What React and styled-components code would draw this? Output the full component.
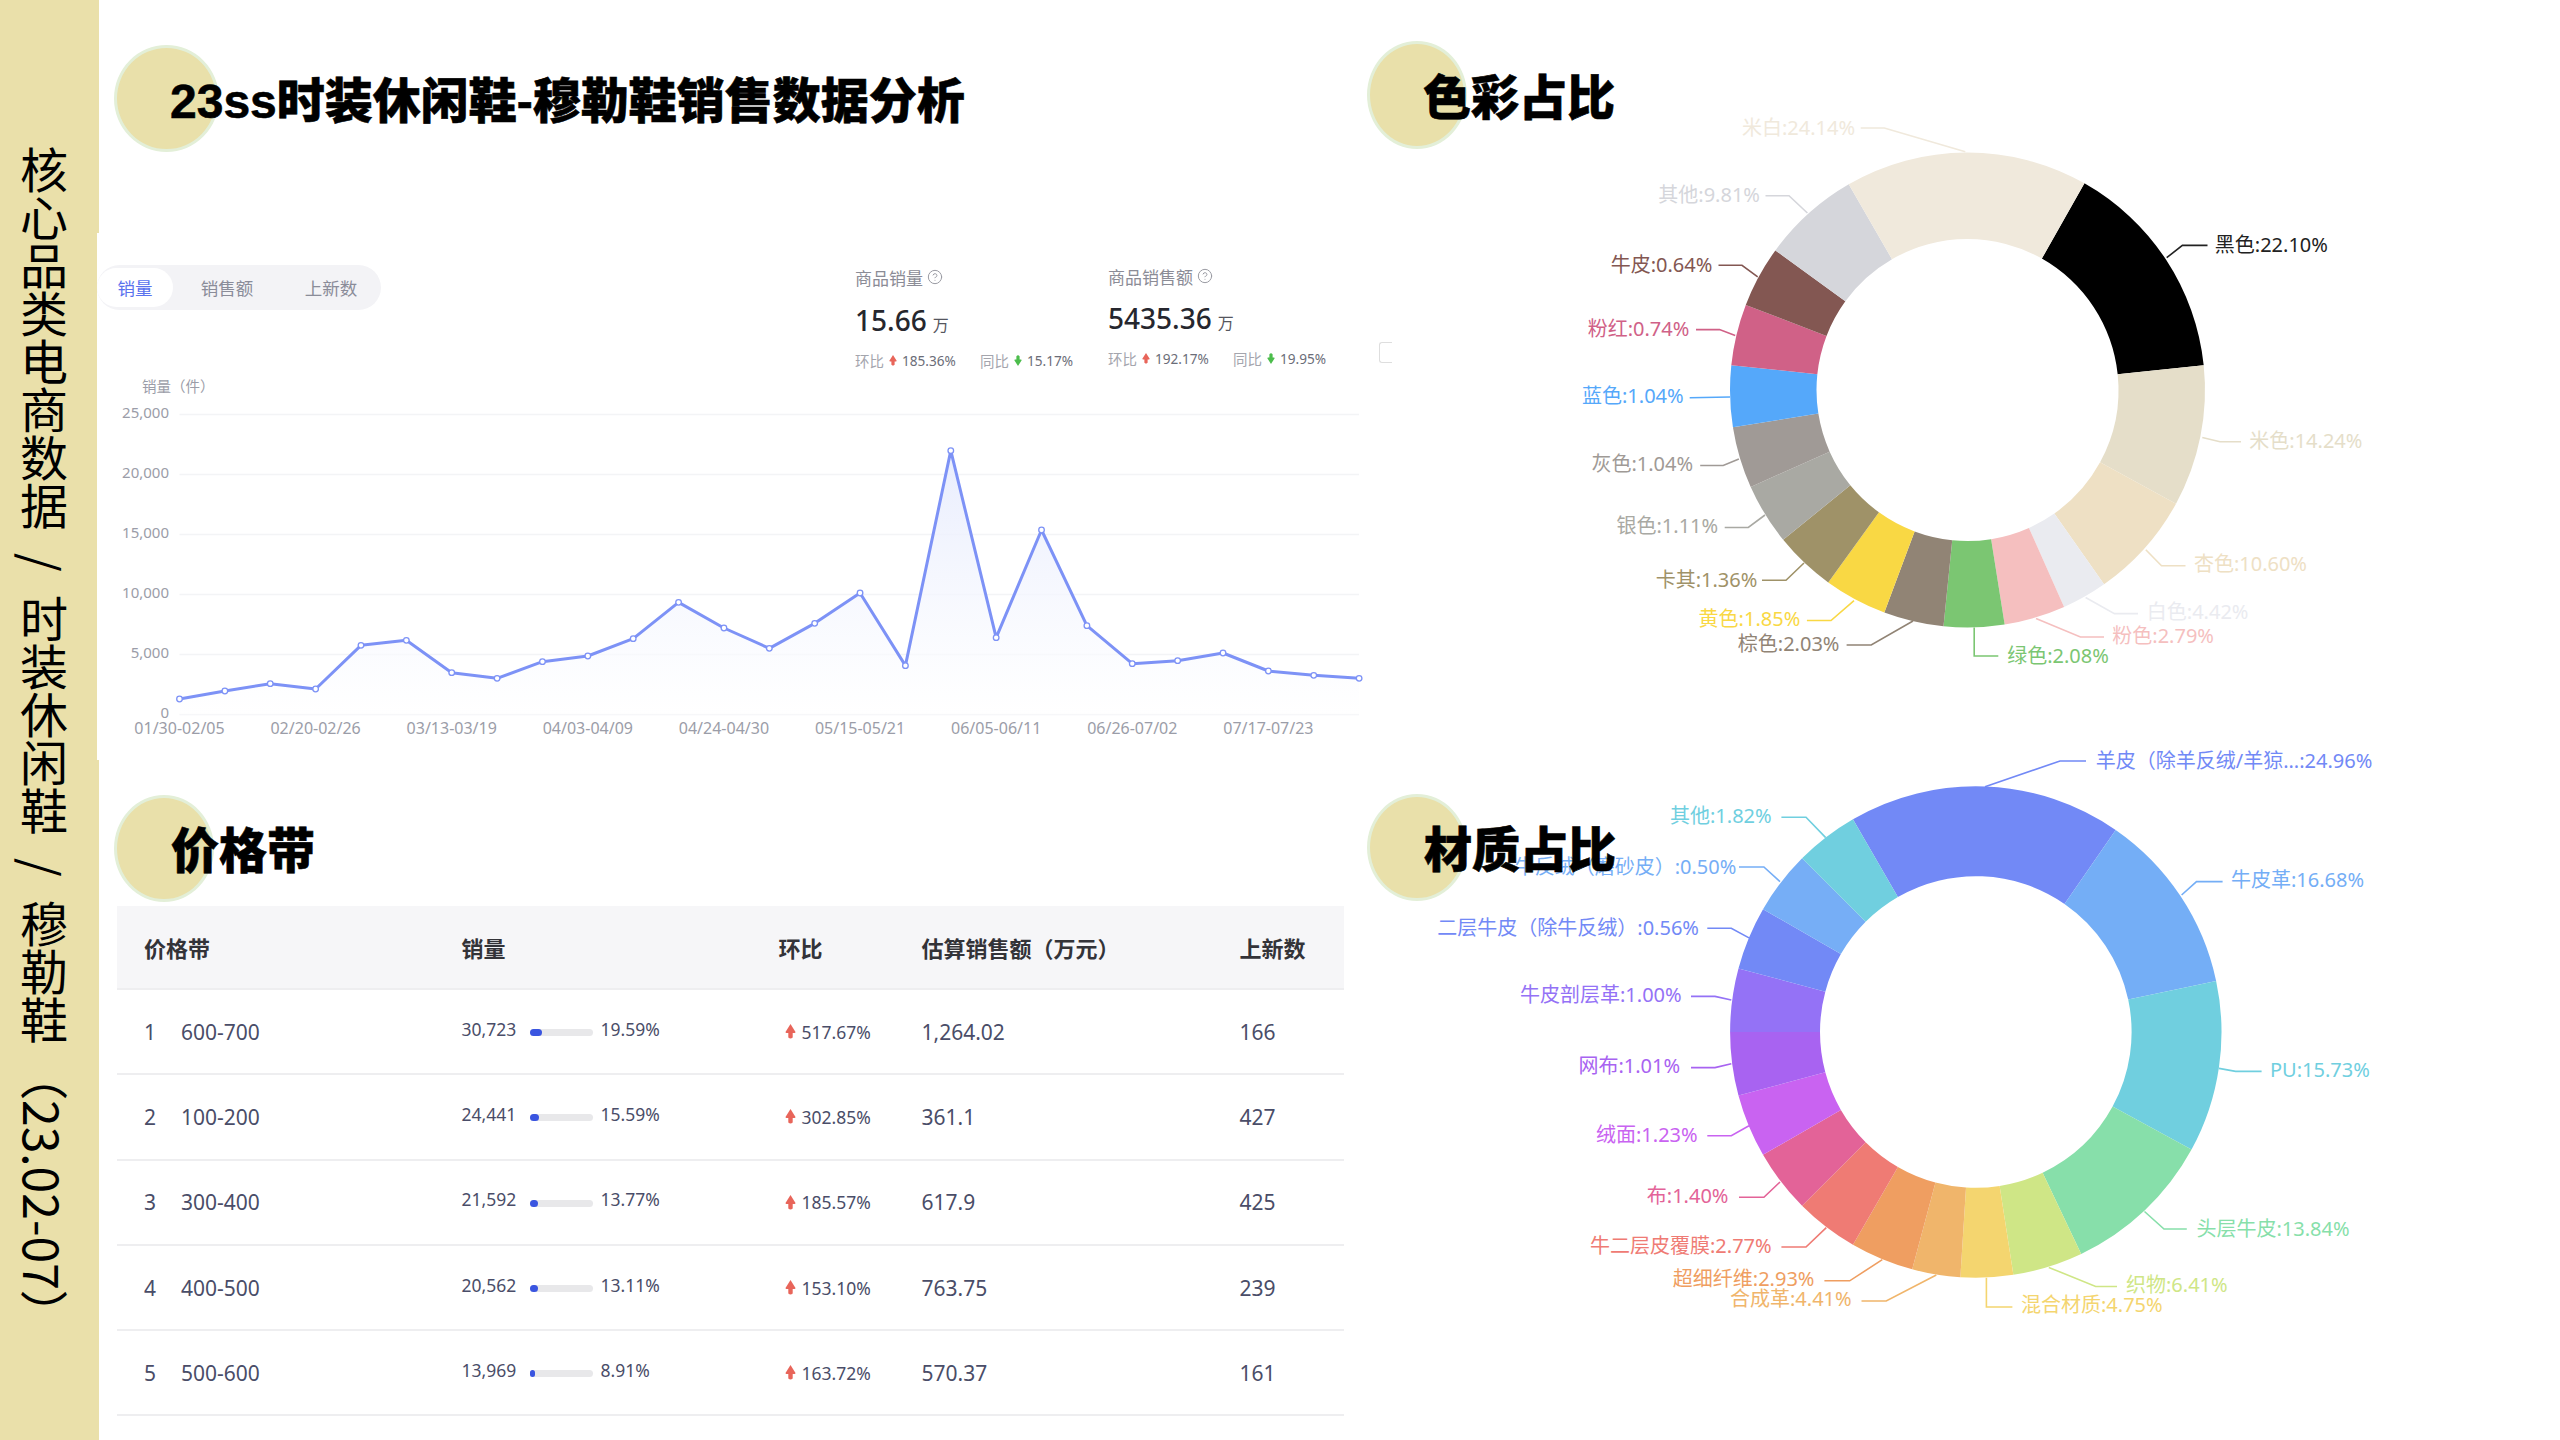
import React from "react";
import styled, { createGlobalStyle } from "styled-components";
import { CircleHelp } from "lucide-react";

const FONT = `"Noto Sans", "Noto Sans CJK SC", sans-serif`;

const Global = createGlobalStyle`
  html, body { margin: 0; padding: 0; background: #fff; }
  body { font-family: ${FONT}; }
`;

const Page = styled.div`
  display: flex;
  width: 2560px;
  height: 1440px;
  overflow: hidden;
  background: #fff;
`;

const Sidebar = styled.aside`
  flex: 0 0 99px;
  height: 1440px;
  box-sizing: border-box;
  padding: 146px 0 0 20px;
  background: #eae0aa;
`;

const SideText = styled.h2`
  margin: 0;
  writing-mode: vertical-rl;
  font-family: "Noto Sans CJK SC", sans-serif;
  font-size: 48px;
  line-height: 47px;
  font-weight: 400;
  color: #000;
  white-space: nowrap;
`;

const SideSep = styled.span`
  display: inline-block;
  margin: 23px 0;
`;

const SideDate = styled.span`
  margin-top: 8px;
`;

const LeftColumn = styled.section`
  flex: 0 0 1268px;
  display: flex;
  flex-direction: column;
  padding-top: 45px;
`;

const RightColumn = styled.section`
  flex: 1;
  display: flex;
  flex-direction: column;
`;

const HeadingRow = styled.header`
  position: relative;
  z-index: 2;
  display: flex;
  align-items: center;
  margin: ${(p) => p.$margin || "0"};
`;

const HeadingDot = styled.div`
  flex: none;
  box-sizing: border-box;
  width: ${(p) => p.$w}px;
  height: ${(p) => p.$h}px;
  border-radius: 50%;
  background: #e9e0aa;
  border: 3px solid #e3efd8;
`;

const HeadingText = styled.h1`
  margin: 7px 0 0 ${(p) => p.$overlap}px;
  font-family: "Liberation Sans", "Noto Sans CJK SC", sans-serif;
  font-size: 48px;
  line-height: 60px;
  font-weight: 900;
  -webkit-text-stroke: 0.6px #000;
  color: #000;
  white-space: nowrap;
`;

const ChartPanel = styled.div`
  position: relative;
  z-index: 1;
  margin: 81px 0 0 -2px;
  width: 1270px;
  height: 527px;
  background: #fff;
`;

const PanelTop = styled.div`
  display: flex;
  align-items: flex-start;
  height: 142px;
`;

const Tabs = styled.div`
  display: flex;
  align-items: center;
  width: 284px;
  height: 45px;
  margin-top: 32px;
  box-sizing: border-box;
  padding: 3px 0;
  border-radius: 23px;
  background: #f3f3f6;
`;

const Tab = styled.div`
  display: flex;
  align-items: center;
  justify-content: center;
  width: ${(p) => p.$w}px;
  height: 39px;
  border-radius: 20px;
  font-size: 17.5px;
  color: ${(p) => (p.$active ? "#5a72ee" : "#8a8c99")};
  background: ${(p) => (p.$active ? "#fff" : "transparent")};
`;

const Stats = styled.div`
  display: flex;
  margin: 32px 0 0 474px;
`;

const Stat = styled.div`
  width: 253px;
  display: flex;
  flex-direction: column;
  margin-top: ${(p) => p.$top}px;
`;

const StatTitle = styled.div`
  display: flex;
  align-items: center;
  gap: 4px;
  height: 24px;
  font-size: 17px;
  color: #8b8c96;
  svg { color: #9a9ba3; }
`;

const StatValue = styled.div`
  display: flex;
  align-items: baseline;
  gap: 6px;
  height: 40px;
  margin-top: ${(p) => p.$gap}px;
  font-size: 28px;
  line-height: 40px;
  font-weight: 500;
  color: #26272e;
`;

const StatUnit = styled.span`
  font-size: 16px;
  font-weight: 400;
  color: #55565e;
`;

const StatCompare = styled.div`
  display: flex;
  align-items: center;
  height: 22px;
  margin-top: ${(p) => p.$gap}px;
  font-size: 13.6px;
  color: #6b6d78;
`;

const CompareItem = styled.span`
  display: flex;
  align-items: center;
  gap: 5px;
  width: ${(p) => p.$w}px;
`;

const CompareLabel = styled.span`
  color: #a4a5ad;
  font-size: 14.5px;
`;

const ArrowIcon = styled.svg`
  flex: none;
`;

const OpenBox = styled.div`
  position: absolute;
  left: 1282px;
  top: 109px;
  width: 12px;
  height: 19px;
  border: 1px solid #dedede;
  border-right: 0;
  border-radius: 3px 0 0 3px;
`;

const LineSvg = styled.svg`
  display: block;
`;

const AxisText = styled.text`
  font-family: ${FONT};
  font-size: ${(p) => p.$size || 15}px;
  fill: #9b9da8;
`;

const PriceTable = styled.div`
  display: flex;
  flex-direction: column;
  margin: 4px 0 0 18px;
  width: 1227px;
`;

const TableRow = styled.div`
  display: grid;
  grid-template-columns: 317.5px 317px 143px 318px 1fr;
  align-items: center;
  box-sizing: border-box;
  height: ${(p) => (p.$head ? 84 : 85.3)}px;
  padding-left: 27px;
  font-size: ${(p) => (p.$head ? 22 : 21)}px;
  font-weight: ${(p) => (p.$head ? 700 : 400)};
  color: ${(p) => (p.$head ? "#333338" : "#4a4d68")};
  background: ${(p) => (p.$head ? "#f6f6f8" : "#fff")};
  border-bottom: 2px solid #eeeef0;
`;

const HeadCell = styled.div`
  white-space: nowrap;
`;

const RangeCell = styled.div`
  display: flex;
`;

const RankNo = styled.span`
  width: 37px;
`;

const SalesCell = styled.div`
  display: flex;
  align-items: center;
  font-size: 17.5px;
`;

const SalesText = styled.span`
  margin-top: -6px;
  width: ${(p) => p.$w}px;
`;

const BarTrack = styled.div`
  width: 63px;
  height: 7px;
  margin: 2px 8px 0 0;
  border-radius: 4px;
  background: #e8e8ea;
`;

const BarFill = styled.div`
  height: 100%;
  border-radius: 4px;
  background: #3a55e0;
`;

const GrowthCell = styled.div`
  display: flex;
  align-items: center;
  gap: 6px;
  padding-left: 6px;
  font-size: 17.5px;
`;

const DonutSvg = styled.svg`
  display: block;
  position: relative;
  z-index: 1;
  margin-top: ${(p) => p.$top}px;
`;

const DonutLabel = styled.text`
  font-family: ${FONT};
  font-size: 20px;
  dominant-baseline: central;
`;

/* ---------- data ---------- */

const TREND_Y = [1017, 993, 971, 987, 856, 841, 938, 955, 905, 888, 836, 727, 804, 865, 790, 699, 917, 272, 833, 510, 797, 911, 902, 879, 933, 946, 955]
  .map((z) => 360 + z / 3);
const trendPoints = TREND_Y.map((y, i) => [179.5 + 45.37 * i, y]);
const GRID = [["25,000", 414.5], ["20,000", 474.5], ["15,000", 534.5], ["10,000", 594.5], ["5,000", 654.5], ["0", 714.5]];
const XTICKS = [["01/30-02/05", 0], ["02/20-02/26", 3], ["03/13-03/19", 6], ["04/03-04/09", 9], ["04/24-04/30", 12], ["05/15-05/21", 15], ["06/05-06/11", 18], ["06/26-07/02", 21], ["07/17-07/23", 24]];

const ROWS = [
  [1, "600-700", "30,723", 19.59, "517.67%", "1,264.02", 166],
  [2, "100-200", "24,441", 15.59, "302.85%", "361.1", 427],
  [3, "300-400", "21,592", 13.77, "185.57%", "617.9", 425],
  [4, "400-500", "20,562", 13.11, "153.10%", "763.75", 239],
  [5, "500-600", "13,969", 8.91, "163.72%", "570.37", 161],
];

const COLOR_SEGS = [
  ["#000000", 29.5, 84, "黑色:22.10%", 2214.8, 244.3, [[2166.7, 257.7], [2182.4, 245.4], [2207.5, 245.4]], "#222222"],
  ["#e5dec9", 84, 118.6, "米色:14.24%", 2249.3, 440.6, [[2202.3, 437.5], [2220, 441.8], [2241, 441.8]]],
  ["#eee0c4", 118.6, 144.9, "杏色:10.60%", 2193.9, 563, [[2145.8, 549.7], [2161.5, 565.7], [2185.5, 565.7]]],
  ["#eaebf0", 144.9, 156, "白色:4.42%", 2146.8, 611.7, [[2085.6, 597.5], [2114.4, 613.6], [2138, 613.6]]],
  ["#f5bfbf", 156, 171, "粉色:2.79%", 2112.3, 635.8, [[2036, 618.6], [2080.4, 637], [2104, 637]]],
  ["#7bc672", 171, 185.8, "绿色:2.08%", 2007.2, 655, [[1974.2, 627.4], [1974.2, 656], [1998.3, 656]]],
  ["#918475", 185.8, 200.5, "棕色:2.03%", 1737.8, 643.4, [[1913, 621], [1871.2, 645], [1846.6, 645]]],
  ["#f9d844", 200.5, 215.9, "黄色:1.85%", 1698.6, 618.6, [[1854, 600.6], [1831, 620.5], [1806.9, 620.5]]],
  ["#9f9268", 215.9, 230.9, "卡其:1.36%", 1655.7, 579, [[1804, 563], [1786, 580.3], [1762, 580.3]]],
  ["#a9a9a3", 230.9, 245.9, "银色:1.11%", 1616.5, 525.6, [[1765, 515], [1748.3, 527.5], [1724.7, 527.5]]],
  ["#a09a96", 245.9, 261, "灰色:1.04%", 1591.4, 463.6, [[1738.9, 459], [1723.2, 465.5], [1700.2, 465.5]]],
  ["#55a8fa", 261, 276, "蓝色:1.04%", 1582, 395.4, [[1730, 397], [1689.7, 397.7]]],
  ["#d06187", 276, 291, "粉红:0.74%", 1587.7, 328, [[1735.2, 335.4], [1719.5, 329.6], [1696, 329.6]]],
  ["#835752", 291, 306, "牛皮:0.64%", 1610.7, 264.6, [[1757.7, 276.8], [1742, 265.3], [1718.5, 265.3]]],
  ["#d5d6db", 306, 330, "其他:9.81%", 1658.3, 194.9, [[1807.4, 213], [1789, 195.7], [1765.5, 195.7]]],
  ["#f0e9dc", 330, 389.5, "米白:24.14%", 1742, 127.6, [[1965.3, 151.7], [1884.3, 128], [1860.7, 128]]],
];

const MATERIAL_SEGS = [
  ["#7289f6", 330, 394.7, "羊皮（除羊反绒/羊猄...:24.96%", 2095.7, 760, [[1985, 786.7], [2060, 761], [2086, 761]]],
  ["#74aef6", 34.7, 78, "牛皮革:16.68%", 2231, 879.7, [[2181.6, 895], [2196.5, 881.6], [2222.6, 881.6]]],
  ["#70cfdf", 78, 118.6, "PU:15.73%", 2270, 1069, [[2219, 1068.4], [2235.6, 1071.4], [2261.6, 1071.4]]],
  ["#87dfaa", 118.6, 154.6, "头层牛皮:13.84%", 2196.5, 1228, [[2144.5, 1211.5], [2164, 1229], [2186.8, 1229]]],
  ["#cfe686", 154.6, 171.2, "织物:6.41%", 2126, 1284.6, [[2048.8, 1267.4], [2095.7, 1286.5], [2117, 1286.5]]],
  ["#f4d56f", 171.2, 183.6, "混合材质:4.75%", 2021, 1304.5, [[1986.4, 1277.7], [1986.4, 1307], [2012.4, 1307]]],
  ["#f0b56b", 183.6, 195, "合成革:4.41%", 1730, 1298.7, [[1936.3, 1275], [1886.2, 1301], [1861.5, 1301]]],
  ["#ef9e61", 195, 210, "超细纤维:2.93%", 1672.8, 1278.5, [[1882.3, 1259.7], [1849.7, 1280.8], [1824.4, 1280.8]]],
  ["#ef7b74", 210, 225, "牛二层皮覆膜:2.77%", 1590, 1245, [[1826.3, 1227.6], [1806, 1247], [1781.4, 1247]]],
  ["#e36398", 225, 240, "布:1.40%", 1646.8, 1195.4, [[1780, 1182], [1763.9, 1197.3], [1739, 1197.3]]],
  ["#c963f1", 240, 255, "绒面:1.23%", 1596, 1134, [[1749, 1125.8], [1731.3, 1135.7], [1707.3, 1135.7]]],
  ["#a863f1", 255, 270, "网布:1.01%", 1578.4, 1065.3, [[1731.3, 1063.8], [1715, 1067.6], [1691, 1067.6]]],
  ["#9472f6", 270, 285, "牛皮剖层革:1.00%", 1520, 994.5, [[1731.3, 1000], [1715, 996.4], [1691, 996.4]]],
  ["#7289f6", 285, 300, "二层牛皮（除牛反绒）:0.56%", 1437.3, 927.5, [[1749, 937.9], [1731.3, 928.3], [1707.3, 928.3]]],
  ["#76aef6", 300, 315, "牛反绒（磨砂皮）:0.50%", 1514.7, 866.3, [[1780, 881.6], [1763.9, 867], [1739, 867]]],
  ["#70cfdf", 315, 330, "其他:1.82%", 1670, 815.4, [[1825.7, 837.6], [1806, 817.3], [1781.4, 817.3]]],
];

const polar = (cx, cy, r, deg) => {
  const a = (deg * Math.PI) / 180;
  return [cx + r * Math.sin(a), cy - r * Math.cos(a)];
};

const arcPath = (cx, cy, R, r, a, b) => {
  const large = b - a > 180 ? 1 : 0;
  const [x1, y1] = polar(cx, cy, R, a);
  const [x2, y2] = polar(cx, cy, R, b);
  const [x3, y3] = polar(cx, cy, r, b);
  const [x4, y4] = polar(cx, cy, r, a);
  return `M${x1} ${y1}A${R} ${R} 0 ${large} 1 ${x2} ${y2}L${x3} ${y3}A${r} ${r} 0 ${large} 0 ${x4} ${y4}Z`;
};

/* ---------- parts ---------- */

const Arrow = ({ up = true, w = 8, h = 11 }) => (
  <ArrowIcon width={w} height={h} viewBox="0 0 10 15">
    {up ? (
      <path d="M5 0 L10 8 Q10 9 9 9 H7.2 V13.4 Q5 15.6 2.8 13.4 V9 H1 Q0 9 0 8 Z" fill="#e8655a" />
    ) : (
      <path d="M5 15 L10 7 Q10 6 9 6 H7.2 V1.6 Q5 -0.6 2.8 1.6 V6 H1 Q0 6 0 7 Z" fill="#4cbd4c" />
    )}
  </ArrowIcon>
);

const Heading = ({ w, h, overlap, margin, children }) => (
  <HeadingRow $margin={margin}>
    <HeadingDot $w={w} $h={h} />
    <HeadingText $overlap={overlap}>{children}</HeadingText>
  </HeadingRow>
);

const StatBlock = ({ title, value, a, b, top, gapValue, gapRow }) => (
  <Stat $top={top}>
    <StatTitle>
      {title}
      <CircleHelp size={16} strokeWidth={1.5} />
    </StatTitle>
    <StatValue $gap={gapValue}>
      {value}
      <StatUnit>万</StatUnit>
    </StatValue>
    <StatCompare $gap={gapRow}>
      <CompareItem $w={125}>
        <CompareLabel>环比</CompareLabel>
        <Arrow up />
        {a}
      </CompareItem>
      <CompareItem>
        <CompareLabel>同比</CompareLabel>
        <Arrow up={false} />
        {b}
      </CompareItem>
    </StatCompare>
  </Stat>
);

const TrendChart = () => {
  const line = trendPoints.map((p) => p.join(",")).join(" ");
  const area = `179.5,714.5 ${line} ${trendPoints[26][0]},714.5`;
  return (
    <LineSvg width="1270" height="385" viewBox="97 375 1270 385">
      <defs>
        <linearGradient id="trendFill" x1="0" y1="0" x2="0" y2="1">
          <stop offset="0" stopColor="#e6ebfd" stopOpacity="0.9" />
          <stop offset="1" stopColor="#ffffff" stopOpacity="0.6" />
        </linearGradient>
      </defs>
      <AxisText x="142" y="392" $size={14.5}>销量（件）</AxisText>
      {GRID.map(([label, y]) => (
        <g key={label}>
          <line x1="179.5" x2="1359" y1={y} y2={y} stroke="#f3f4f6" strokeWidth="1.5" />
          <AxisText x="169" y={y - 1} textAnchor="end" dominantBaseline="middle">{label}</AxisText>
        </g>
      ))}
      {XTICKS.map(([label, i]) => (
        <AxisText key={label} x={179.5 + 45.37 * i} y="730" textAnchor="middle" dominantBaseline="middle" $size={16}>{label}</AxisText>
      ))}
      <polygon points={area} fill="url(#trendFill)" />
      <polyline points={line} fill="none" stroke="#7d92f6" strokeWidth="3" strokeLinejoin="round" />
      {trendPoints.map(([x, y]) => (
        <circle key={x} cx={x} cy={y} r="2.8" fill="#fff" stroke="#7d92f6" strokeWidth="1.3" />
      ))}
    </LineSvg>
  );
};

const Donut = ({ segs, cx, cy, R, r, top, viewY }) => (
  <DonutSvg $top={top} width="1193" height="600" viewBox={`1367 ${viewY} 1193 600`}>
    {segs.map(([color, a, b]) => (
      <path key={a} d={arcPath(cx, cy, R, r, a, b)} fill={color} />
    ))}
    {segs.map(([color, , , text, x, y, pts, ink], i) => (
      <g key={text + i}>
        <polyline points={pts.map((p) => p.join(",")).join(" ")} fill="none" stroke={ink || color} strokeWidth="1.6" />
        <DonutLabel x={x} y={y} fill={ink || color}>{text}</DonutLabel>
      </g>
    ))}
  </DonutSvg>
);

export default function App() {
  return (
    <Page>
      <Global />
      <Sidebar>
        <SideText>
          核心品类电商数据<SideSep>/</SideSep>时装休闲鞋<SideSep>/</SideSep>穆勒鞋<SideDate>（23.02-07）</SideDate>
        </SideText>
      </Sidebar>

      <LeftColumn>
        <Heading w={105} h={107} overlap={-49} margin="0 0 0 15px">23ss时装休闲鞋-穆勒鞋销售数据分析</Heading>

        <ChartPanel>
          <PanelTop>
            <Tabs>
              <Tab $active $w={76}>销量</Tab>
              <Tab $w={108}>销售额</Tab>
              <Tab $w={100}>上新数</Tab>
            </Tabs>
            <Stats>
              <StatBlock title="商品销量" value="15.66" a="185.36%" b="15.17%" top={0} gapValue={11} gapRow={9} />
              <StatBlock title="商品销售额" value="5435.36" a="192.17%" b="19.95%" top={-1} gapValue={10} gapRow={9} />
            </Stats>
          </PanelTop>
          <OpenBox />
          <TrendChart />
        </ChartPanel>

        <Heading w={100} h={107} overlap={-43} margin="35px 0 0 15px">价格带</Heading>

        <PriceTable>
          <TableRow $head>
            <HeadCell>价格带</HeadCell>
            <HeadCell>销量</HeadCell>
            <HeadCell>环比</HeadCell>
            <HeadCell>估算销售额（万元）</HeadCell>
            <HeadCell>上新数</HeadCell>
          </TableRow>
          {ROWS.map(([rank, range, sales, pct, growth, amount, fresh]) => (
            <TableRow key={rank}>
              <RangeCell>
                <RankNo>{rank}</RankNo>
                {range}
              </RangeCell>
              <SalesCell>
                <SalesText $w={68}>{sales}</SalesText>
                <BarTrack>
                  <BarFill style={{ width: `${pct}%` }} />
                </BarTrack>
                <SalesText>{pct}%</SalesText>
              </SalesCell>
              <GrowthCell>
                <Arrow up w={11} h={15} />
                {growth}
              </GrowthCell>
              <div>{amount}</div>
              <div>{fresh}</div>
            </TableRow>
          ))}
        </PriceTable>
      </LeftColumn>

      <RightColumn>
        <Heading w={100} h={108} overlap={-44} margin="41px 0 0 0">色彩占比</Heading>
        <Donut segs={COLOR_SEGS} cx={1967.5} cy={390} R={237.5} r={151} top={-49} viewY={100} />
        <Heading w={100} h={107} overlap={-43} margin="94px 0 0 0">材质占比</Heading>
        <Donut segs={MATERIAL_SEGS} cx={1975.8} cy={1032} R={245.7} r={155.8} top={-161} viewY={740} />
      </RightColumn>
    </Page>
  );
}
